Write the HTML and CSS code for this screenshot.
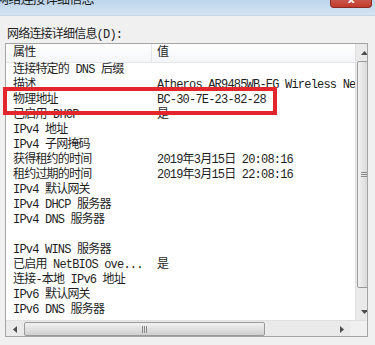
FILE: index.html
```html
<!DOCTYPE html>
<html lang="zh-CN">
<head>
  <meta charset="UTF-8" />
  <meta name="viewport" content="width=device-width, initial-scale=1.0" />
  <title>网络连接详细信息</title>
  <link rel="stylesheet" href="styles.css">
</head>
<body>
  <div class="titlebar">
    <span class="title">网络连接详细信息</span>
    <span class="close">x</span>
  </div>
  <div class="label">网络连接详细信息(D):</div>
  <div class="listbox">
    <div class="view">
      <div class="main">
        <div class="header">
          <div class="col1">属性</div>
          <div class="col2">值</div>
        </div>
        <div class="row"><div class="col1">连接特定的 DNS 后缀</div><div class="col2"></div></div>
        <div class="row"><div class="col1">描述</div><div class="col2">Atheros AR9485WB-EG Wireless Ne</div></div>
        <div class="row"><div class="col1">物理地址</div><div class="col2">BC-30-7E-23-82-28</div></div>
        <div class="row"><div class="col1">已启用 DHCP</div><div class="col2">是</div></div>
        <div class="row"><div class="col1">IPv4 地址</div><div class="col2"></div></div>
        <div class="row"><div class="col1">IPv4 子网掩码</div><div class="col2"></div></div>
        <div class="row"><div class="col1">获得租约的时间</div><div class="col2">2019年3月15日 20:08:16</div></div>
        <div class="row"><div class="col1">租约过期的时间</div><div class="col2">2019年3月15日 22:08:16</div></div>
        <div class="row"><div class="col1">IPv4 默认网关</div><div class="col2"></div></div>
        <div class="row"><div class="col1">IPv4 DHCP 服务器</div><div class="col2"></div></div>
        <div class="row"><div class="col1">IPv4 DNS 服务器</div><div class="col2"></div></div>
        <div class="row"><div class="col1"></div><div class="col2"></div></div>
        <div class="row"><div class="col1">IPv4 WINS 服务器</div><div class="col2"></div></div>
        <div class="row"><div class="col1">已启用 NetBIOS ove...</div><div class="col2">是</div></div>
        <div class="row"><div class="col1">连接-本地 IPv6 地址</div><div class="col2"></div></div>
        <div class="row"><div class="col1">IPv6 默认网关</div><div class="col2"></div></div>
        <div class="row"><div class="col1">IPv6 DNS 服务器</div><div class="col2"></div></div>
      </div>
      <div class="vscroll">
        <div class="sbtn">
          <svg width="7" height="4" viewBox="0 0 7 4"><polygon points="0,4 3.5,0 7,4" fill="#4d4d4d"/></svg>
        </div>
        <div class="vthumb"><span class="grip-v"></span></div>
        <div class="track"></div>
        <div class="sbtn">
          <svg width="7" height="4" viewBox="0 0 7 4"><polygon points="0,0 7,0 3.5,4" fill="#4d4d4d"/></svg>
        </div>
      </div>
    </div>
    <div class="hscroll">
      <div class="sbtn">
        <svg width="4" height="7" viewBox="0 0 4 7"><polygon points="4,0 4,7 0,3.5" fill="#4d4d4d"/></svg>
      </div>
      <div class="hthumb"><span class="grip-h"></span></div>
      <div class="track"></div>
      <div class="sbtn">
        <svg width="4" height="7" viewBox="0 0 4 7"><polygon points="0,0 4,3.5 0,7" fill="#4d4d4d"/></svg>
      </div>
      <div class="corner"></div>
    </div>
  </div>
  <div class="highlight"></div>
</body>
</html>
```

FILE: styles.css
```css
html, body {
  margin: 0;
  padding: 0;
}
body {
  position: relative;
  width: 375px;
  height: 345px;
  overflow: hidden;
  background: #f0f0f0;
  font-family: "Liberation Mono", "Noto Sans CJK SC", monospace;
  font-size: 12px;
  letter-spacing: -0.8px;
  color: #1e1e1e;
}
.titlebar {
  display: flex;
  height: 15px;
  background: linear-gradient(to bottom, #bcd4ec, #d5e5f4);
  border-bottom: 1px solid #c8d6e4;
  overflow: hidden;
}
.title {
  margin-top: -8px;
  margin-left: -4px;
  font-size: 13px;
  line-height: 15px;
}
.close {
  margin-left: auto;
  margin-right: 3px;
  width: 40px;
  height: 7px;
  background: linear-gradient(to bottom, #c9564a, #c23a2c);
  border: 1px solid #8a2a22;
  border-top: none;
  border-radius: 0 0 4px 4px;
  color: #fff;
  font-family: "DejaVu Sans", sans-serif;
  font-weight: bold;
  font-size: 11px;
  line-height: 0;
  text-align: center;
}
.label {
  margin: 11px 0 0 7px;
  height: 16px;
  line-height: 16px;
}
.listbox {
  box-sizing: border-box;
  margin-left: 5px;
  width: 363px;
  height: 294px;
  border: 1px solid #a5a5a5;
  background: #fff;
  overflow: hidden;
}
.view {
  display: flex;
  height: 276px;
}
.main {
  flex: 1;
  background: #fff;
}
.header {
  display: flex;
  height: 18px;
  line-height: 18px;
  border-bottom: 1px solid #e3e5e8;
  background: linear-gradient(to bottom, #ffffff, #f4f5f7);
}
.header .col1 {
  border-right: 1px solid #e3e5e8;
}
.col1 {
  box-sizing: border-box;
  width: 146px;
  padding-left: 7px;
  white-space: nowrap;
}
.col2 {
  padding-left: 5px;
  white-space: nowrap;
}
.row {
  display: flex;
  height: 15px;
  line-height: 15px;
}
.vscroll {
  display: flex;
  flex-direction: column;
  width: 17px;
  background: #eaeaea;
  border-left: 1px solid #e0e0e0;
}
.sbtn {
  display: flex;
  align-items: center;
  justify-content: center;
  width: 17px;
  height: 17px;
  flex: none;
}
.hscroll .sbtn {
  height: 16px;
}
.vthumb {
  display: flex;
  align-items: center;
  justify-content: center;
  box-sizing: border-box;
  height: 227px;
  margin: 0 1px;
  border: 1px solid #9a9a9a;
  border-radius: 2px;
  background: linear-gradient(to right, #f2f2f2, #e0e0e0 50%, #cfcfcf);
}
.track {
  flex: 1;
}
.grip-v {
  width: 7px;
  height: 6px;
  background: repeating-linear-gradient(to bottom, #8a8a8a 0 1px, transparent 1px 2px);
}
.hscroll {
  display: flex;
  height: 16px;
  background: #eaeaea;
  border-top: 1px solid #e0e0e0;
}
.hthumb {
  display: flex;
  align-items: center;
  justify-content: center;
  box-sizing: border-box;
  width: 241px;
  margin: 1px 0 1px 1px;
  border: 1px solid #9a9a9a;
  border-radius: 2px;
  background: linear-gradient(to bottom, #f2f2f2, #e0e0e0 50%, #cfcfcf);
}
.grip-h {
  width: 6px;
  height: 7px;
  background: repeating-linear-gradient(to right, #8a8a8a 0 1px, transparent 1px 2px);
}
.corner {
  width: 17px;
  background: #f0f0f0;
}
.highlight {
  position: absolute;
  left: 3px;
  top: 87px;
  width: 274px;
  height: 28px;
  box-sizing: border-box;
  border: 4px solid #e3262c;
}
```
